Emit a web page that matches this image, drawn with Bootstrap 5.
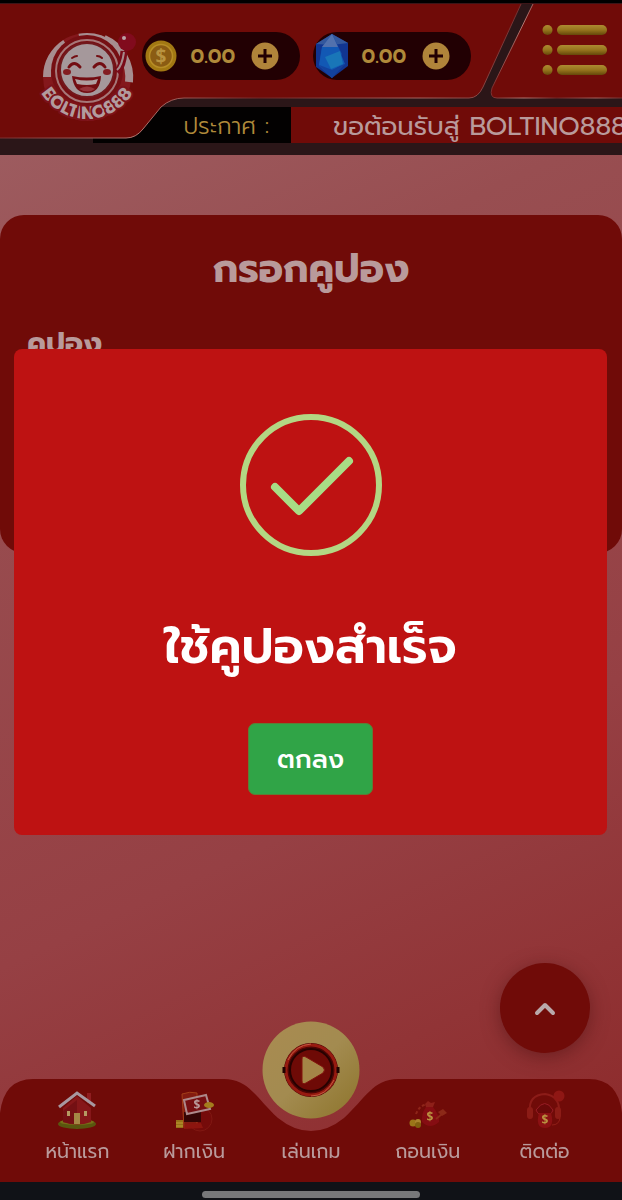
<!DOCTYPE html>
<html lang="th">
<head>
<meta charset="utf-8">
<meta name="viewport" content="width=device-width, initial-scale=1">
<title>BOLTINO888</title>
<link rel="stylesheet" href="https://cdn.jsdelivr.net/npm/bootstrap@5.3.0/dist/css/bootstrap.min.css">
<style>
:root{--red:#700b08;--gold:#b08a3a;--soft:#b99a9b}
body{font-family:"Prompt","Kanit","Noto Sans Thai","Noto Sans",sans-serif;min-height:100vh;background:linear-gradient(155deg,#a06367 0%,#984e51 28%,#964044 65%,#8c2828 100%) fixed;color:var(--soft)}
.site-head{background:#2b1618;border-top:3px solid #000;height:155px}
.head-art{left:0;top:0;width:100%;height:152px;pointer-events:none}
.head-row{height:104px;padding:0 14px 0 25px}
.logo-link{width:117px;margin-top:17px;flex:none}
.logo-link svg{width:120px;height:110px}
.wallets{gap:13px;margin-top:29px}
.pill{width:158px;height:48px;border-radius:24px;background:#220003;padding:0 21px 0 2px}
.amount{font-weight:600;font-size:20px;line-height:24px;color:var(--gold);width:48px}
.round-btn{border:0;padding:0;background:none;line-height:0}
.menu-btn{margin-top:18px}
.notice-row{height:36px;font-size:23px;line-height:40px}
.notice-label{width:291px;padding-right:22px;color:var(--gold);font-weight:300}
.notice-text{padding-left:42px;font-size:26px;overflow:hidden;white-space:nowrap}
.coupon-card{margin-top:60px;height:338px;border-radius:24px;background:var(--red);padding:32px 27px}
.coupon-card h1{font-size:39px;line-height:44px;font-weight:700;margin:0 0 36px}
.coupon-card label{font-size:29px;line-height:32px;font-weight:700;margin-bottom:12px}
.coupon-card input{height:52px;background:#a99;border:0}
.overlay{inset:0 0 16px;z-index:20;padding:0 15px 0 14px}
.dialog-box{background:#be1212;border-radius:8px;height:486px;padding-top:64px;color:#fff}
.dialog-box h2{font-size:49px;line-height:60px;font-weight:600;margin:60px 0 46px}
.ok-btn{width:125px;height:72px;border-radius:7px;background:#30a447;border:1px solid #607c35;color:#fff;font-size:26px;font-weight:500}
.ok-btn:hover{background:#278a3a;color:#fff}
.up-btn{width:90px;height:90px;right:32px;bottom:147px;border:0;background:var(--red);box-shadow:0 4px 18px #4a101080}
.foot{z-index:10}
.nav-wrap{height:103px;padding:0 19px}
.nav-art{left:0;top:0;width:100%;height:103px}
.nav-wrap a{color:var(--soft);text-decoration:none;font-size:19px;line-height:28px;width:20%;padding-top:9px}
.nav-wrap a svg{display:block;margin:0 auto 6px;width:44px;height:44px}
.nav-wrap a.play{padding-top:0}
.nav-wrap a.play svg{width:98px;height:98px;margin:-58px auto 19px}
.sysbar{height:18px;background:#101217;padding-top:9px}
.sysbar div{width:218px;height:7px;border-radius:4px;background:#77787a}
</style>
</head>
<body>
<svg width="0" height="0" class="position-absolute" aria-hidden="true"><defs>
<linearGradient id="gold" x2="0" y2="1"><stop stop-color="#ad8c31"/><stop offset=".5" stop-color="#96741d"/><stop offset="1" stop-color="#654709"/></linearGradient>
<linearGradient id="disc" x2="1" y2="1"><stop stop-color="#a98b51"/><stop offset=".5" stop-color="#a38b50"/><stop offset="1" stop-color="#8d742b"/></linearGradient>
<linearGradient id="shine"><stop stop-color="#7b3030"/><stop offset=".25" stop-color="#b47872"/><stop offset=".5" stop-color="#742828"/><stop offset=".8" stop-color="#a7645f"/><stop offset="1" stop-color="#743030"/></linearGradient>
</defs></svg>

<header class="site-head position-relative">
  <svg class="head-art position-absolute" viewBox="0 3 622 152" preserveAspectRatio="none" aria-hidden="true">
    <path d="M93 107H291V143H93Z" fill="#030101"/><path d="M291 107H622V143H291Z" fill="#700b08"/>
    <path d="M0 4H521L483 87Q478 98 469 98H184Q171 98 161 107L143 129Q136 138 126 138H0Z" fill="#700b08"/>
    <path d="M521 4L483 87Q478 98 469 98H184Q171 98 161 107L143 129Q136 138 126 138H0" fill="none" stroke="url(#shine)"/>
    <path d="M533 4L492 88Q489 98 497 98H622V4Z" fill="#700b08"/><path d="M533 4L492 88Q489 98 497 98H622" fill="none" stroke="url(#shine)"/>
    <path d="M0 3.5H622" stroke="#3c1517"/>
  </svg>
  <div class="head-row position-relative d-flex align-items-start">
    <a href="#" class="logo-link" aria-label="BOLTINO888">
      <svg viewBox="25 20 120 110">
        <circle cx="87" cy="77" r="44" fill="#84181c"/>
        <circle cx="87" cy="77" r="40" fill="none" stroke="#a78e90" stroke-width="8" stroke-dasharray="40 15 34 163" transform="rotate(180 87 77)"/>
        <path d="M104 39A42 42 0 0 1 129 82" fill="none" stroke="#a78e90" stroke-width="8"/>
        <circle cx="87" cy="71" r="36" fill="#760f13"/><circle cx="87" cy="71" r="31" fill="none" stroke="#a67778" stroke-width="2"/>
        <path d="M117 72Q123 66 124 51" fill="none" stroke="#790b18" stroke-width="7"/><path d="M117 70Q122 66 124 52" fill="none" stroke="#a68a8b" stroke-width="2"/>
        <circle cx="127" cy="42" r="9" fill="#810b1d"/><circle cx="124" cy="38" r="2" fill="#b9a3a5"/>
        <circle cx="87" cy="70" r="27" fill="#a5989b" stroke="#72191d" stroke-width="2"/>
        <g fill="none" stroke="#730d12" stroke-width="3" stroke-linecap="round"><path d="M69 67Q74 60 80 67M94 67Q100 60 105 67"/><path d="M72 58Q75 56 77 56M97 56Q100 56 102 58" stroke-width="2"/></g>
        <path d="M72 76Q87 79 101 76Q100 93 87 93Q74 93 72 76Z" fill="#730d12"/><path d="M75 79Q87 82 98 79L96 84Q87 86 77 84Z" fill="#b09fa1"/><path d="M79 89Q87 84 95 89Q88 94 79 89Z" fill="#96343b"/>
        <ellipse cx="67" cy="72" rx="4" ry="3" fill="#831c21"/><ellipse cx="107" cy="72" rx="4" ry="3" fill="#831c21"/>
        <path id="logoArc" d="M34 66A53 53 0 0 0 140 66" fill="none"/>
        <text font-family="Prompt,Open Sans,sans-serif" font-weight="700" font-size="18" fill="#b29b9e" stroke="#7c1219" stroke-width="4" stroke-linejoin="round" paint-order="stroke"><textPath href="#logoArc" startOffset="50%" text-anchor="middle">BOLTINO888</textPath></text>
      </svg>
    </a>
    <div class="wallets d-flex">
      <div class="pill d-flex align-items-center justify-content-between">
        <svg width="34" height="44" viewBox="0 0 34 44" aria-hidden="true"><circle cx="17" cy="22" r="15.500" fill="#a27813"/><circle cx="17" cy="22" r="11.500" fill="#8b5c13" stroke="#b78d26" stroke-width="1.500"/><text x="17" y="29" text-anchor="middle" font-family="Noto Sans,sans-serif" font-size="19" font-weight="700" fill="#b99340">$</text></svg>
        <span class="amount">0.00</span>
        <button class="round-btn" aria-label="เติมเหรียญ"><svg width="28" height="28"><circle cx="14" cy="14" r="13.500" fill="#b0843a"/><path d="M14 7V21M7 14H21" stroke="#220003" stroke-width="3"/></svg></button>
      </div>
      <div class="pill d-flex align-items-center justify-content-between">
        <svg width="34" height="44" viewBox="0 0 34 44" aria-hidden="true"><path d="M17 0L33 9V32L17 44L1 33V10Z" fill="#113591"/><path d="M17 0L33 9L17 11L1 10Z" fill="#34589d"/><path d="M17 0L27 20L17 44L4 32L7 13Z" fill="#164ba8"/><path d="M17 0L7 13L23 13Z" fill="#5271ad"/><path d="M7 13L23 13L30 30L17 36L4 31Z" fill="#1258b4"/><path d="M10 23L25 17L28 30L16 35Z" fill="#1976b8"/><path d="M4 31L17 36L30 30L17 44Z" fill="#13429d"/></svg>
        <span class="amount">0.00</span>
        <button class="round-btn" aria-label="เติมเพชร"><svg width="28" height="28"><circle cx="14" cy="14" r="13.500" fill="#b0843a"/><path d="M14 7V21M7 14H21" stroke="#220003" stroke-width="3"/></svg></button>
      </div>
    </div>
    <button class="round-btn menu-btn ms-auto" aria-label="เมนู"><svg width="66" height="58"><g fill="url(#gold)"><circle cx="5.500" cy="9" r="5"/><circle cx="5.500" cy="29" r="5"/><circle cx="5.500" cy="49" r="5"/><rect x="15" y="4" width="50" height="10" rx="5"/><rect x="15" y="24" width="50" height="10" rx="5"/><rect x="15" y="44" width="50" height="10" rx="5"/></g></svg></button>
  </div>
  <div class="notice-row position-relative d-flex">
    <div class="notice-label text-end flex-shrink-0">ประกาศ :</div>
    <div class="notice-text flex-grow-1">ขอต้อนรับสู่ BOLTINO888</div>
  </div>
</header>

<main>
  <form class="coupon-card">
    <h1 class="text-center">กรอกคูปอง</h1>
    <label for="coupon" class="d-block">คูปอง</label>
    <input id="coupon" class="form-control" type="text">
  </form>
</main>

<div class="overlay position-fixed d-flex align-items-center">
  <div class="dialog-box w-100 text-center" role="dialog" aria-modal="true" aria-labelledby="dialogTitle">
    <svg class="d-block mx-auto" width="144" height="144" fill="none" stroke="#b3d783" aria-hidden="true"><circle cx="72" cy="72" r="68" stroke-width="6"/><path d="M36 74L60 98L110 48" stroke="#a8dd85" stroke-width="8" stroke-linecap="round" stroke-linejoin="round"/></svg>
    <h2 id="dialogTitle">ใช้คูปองสำเร็จ</h2>
    <button class="btn ok-btn" type="button">ตกลง</button>
  </div>
</div>

<button class="up-btn rounded-circle position-fixed" aria-label="กลับขึ้นบน"><svg width="24" height="18" fill="none" stroke="#b9a9ab" stroke-width="4" stroke-linecap="round" stroke-linejoin="round"><path d="M4 13L12 5L20 13"/></svg></button>

<footer class="foot fixed-bottom">
  <nav class="nav-wrap position-relative d-flex text-center">
    <svg class="nav-art position-absolute" viewBox="0 0 622 103" preserveAspectRatio="none" aria-hidden="true"><path d="M0 34Q4 0 33 0H224C249 0 257 20 278 39Q294 52 311 52Q328 52 344 39C365 20 373 0 398 0H589Q618 0 622 34V103H0Z" fill="#700b08"/></svg>
    <a href="#" class="position-relative">
      <svg viewBox="0 0 44 44"><ellipse cx="22" cy="36" rx="19" ry="5" fill="#59560f"/><ellipse cx="22" cy="34" rx="17" ry="3" fill="#766e17"/><path d="M32 5H36V15H32Z" fill="#8f1d20"/><path d="M8 20L22 8L36 20V34Q22 39 8 34Z" fill="#861719"/><path d="M22 12V36Q15 36 8 34V23Z" fill="#741013"/><path d="M4 19L22 5L40 18" fill="none" stroke="#a798a0" stroke-width="3"/><path d="M19 25H25V36H19Z" fill="#a58745"/><path d="M12 23H15V28H12ZM29 23H32V28H29Z" fill="#b59a62"/></svg>หน้าแรก</a>
    <a href="#" class="position-relative">
      <svg viewBox="0 0 44 44"><circle cx="28" cy="31" r="12" fill="#750b0a" stroke="#801812"/><path d="M10 6Q18 3 25 5V37L12 40Z" fill="#841b10" stroke="#a33f18"/><path d="M12 24H29V34H12Z" fill="#350504"/><path d="M12 12L34 7L38 21L15 26Z" fill="#760f12" stroke="#ad898a" stroke-width="2"/><text x="25" y="21" font-size="12" font-weight="700" font-family="Noto Sans,sans-serif" text-anchor="middle" fill="#b9999a">$</text><ellipse cx="37" cy="17" rx="5" ry="3" fill="#a47d1d"/><path d="M4 32H11V40H4Z" fill="#967018"/><path d="M4 35H11M4 38H11" stroke="#c09c35"/><path d="M13 36L29 35L31 40L12 41Z" fill="#8d150f"/></svg>ฝากเงิน</a>
    <a href="#" class="play position-relative">
      <svg viewBox="0 0 98 98"><circle cx="49" cy="49" r="48.500" fill="url(#disc)"/><circle cx="49" cy="49" r="27" fill="#4b0504"/><circle cx="49" cy="49" r="25" fill="none" stroke="#971a10" stroke-width="3"/><circle cx="49" cy="49" r="21" fill="#6e0a06" stroke="#260201" stroke-width="2"/><path d="M26 39Q33 24 49 23M72 59Q64 75 49 75" fill="none" stroke="#c35a42"/><path d="M22 46V52M76 46V52" stroke="#210302" stroke-width="3"/><path d="M40 38Q40 34 44 36L61 46Q64 49 61 52L44 62Q40 64 40 60Z" fill="#a48547" stroke="#82120c"/></svg>เล่นเกม</a>
    <a href="#" class="position-relative">
      <svg viewBox="0 0 44 44"><path d="M10 26Q13 18 21 16" fill="none" stroke="#8e2519" stroke-width="2" stroke-dasharray="3 2"/><path d="M19 16L22 13L25 15L29 14L27 19H20Z" fill="#8e2019"/><path d="M20 19H27Q34 28 33 34Q24 42 16 34Q15 26 20 19Z" fill="#850d12"/><path d="M32 24L37 21L41 25L36 28Z" fill="#8c2918"/><path d="M30 31L36 26" stroke="#8c2918" stroke-width="2"/><text x="24" y="33" font-size="12" font-weight="700" font-family="Noto Sans,sans-serif" text-anchor="middle" fill="#b99240">$</text><circle cx="7" cy="35" r="3.500" fill="#9b7619"/><circle cx="12" cy="34" r="3" fill="#aa832c"/><circle cx="12" cy="37" r="3" fill="#81600f"/></svg>ถอนเงิน</a>
    <a href="#" class="position-relative">
      <svg viewBox="0 0 44 44"><path d="M7 24Q5 7 22 6Q37 8 36 24" fill="none" stroke="#8c1c18" stroke-width="2"/><rect x="4" y="19" width="6" height="12" rx="3" fill="#8c1c16"/><rect x="32" y="19" width="6" height="12" rx="3" fill="#8c1c16"/><circle cx="36" cy="8" r="5.500" fill="#8f1714"/><path d="M13 22Q22 9 30 22Q28 28 22 27Q16 29 13 22Z" fill="#690909" stroke="#981d25"/><path d="M16 25H28Q32 40 22 40Q12 40 16 25Z" fill="#8b1113"/><text x="22" y="36" font-size="12" font-weight="700" font-family="Noto Sans,sans-serif" text-anchor="middle" fill="#b99240">$</text><path d="M29 37Q36 37 37 30" fill="none" stroke="#912018"/></svg>ติดต่อ</a>
  </nav>
  <div class="sysbar"><div class="mx-auto"></div></div>
</footer>
<script src="https://cdn.jsdelivr.net/npm/bootstrap@5.3.0/dist/js/bootstrap.bundle.min.js"></script>
</body>
</html>
